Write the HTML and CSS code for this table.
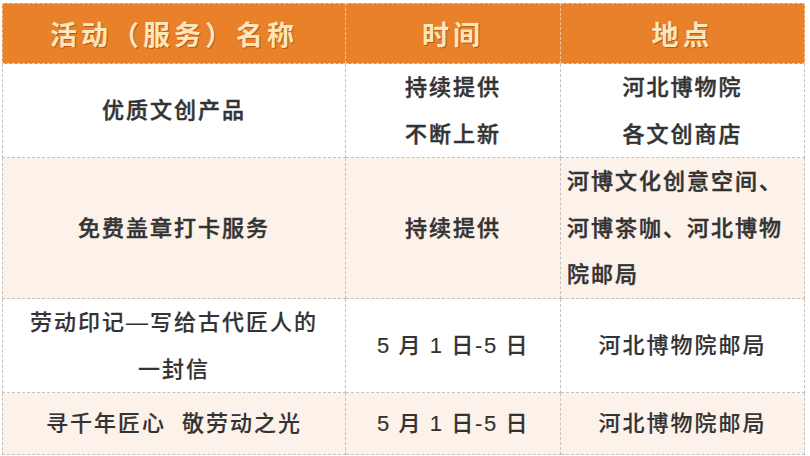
FILE: index.html
```html
<!DOCTYPE html>
<html lang="zh-CN">
<head>
<meta charset="utf-8">
<title>活动安排</title>
<link rel="stylesheet" href="styles.css">
</head>
<body>
<div class="table">
  <div class="cell head first">活动（服务）名称</div>
  <div class="cell head">时间</div>
  <div class="cell head">地点</div>

  <div class="cell first strong">优质文创产品</div>
  <div class="cell strong">持续提供<br>不断上新</div>
  <div class="cell strong">河北博物院<br>各文创商店</div>

  <div class="cell first alt strong">免费盖章打卡服务</div>
  <div class="cell alt strong">持续提供</div>
  <div class="cell alt left strong">河博文化创意空间、河博茶咖、河北博物院邮局</div>

  <div class="cell first wide">劳动印记—写给古代匠人的一封信</div>
  <div class="cell date">5 月 1 日-5 日</div>
  <div class="cell">河北博物院邮局</div>

  <div class="cell first alt">寻千年匠心&nbsp;&nbsp;敬劳动之光</div>
  <div class="cell alt date">5 月 1 日-5 日</div>
  <div class="cell alt">河北博物院邮局</div>
</div>
</body>
</html>
```

FILE: styles.css
```css
html, body {
  margin: 0;
  padding: 0;
  background: #ffffff;
}

body {
  padding: 3px 0 0 2px;
  font-family: "Liberation Sans", "Noto Sans CJK SC", sans-serif;
}

.table {
  display: grid;
  grid-template-columns: 344px 215px 244px;
  grid-template-rows: 61px 94px 141px 94px 62px;
}

.cell {
  box-sizing: border-box;
  display: flex;
  align-items: center;
  justify-content: center;
  text-align: center;
  padding: 2px 6px 0;
  border-right: 1px dashed #c4c0bc;
  border-bottom: 1px dashed #c4c0bc;
  color: #333333;
  font-size: 22px;
  font-weight: 500;
  letter-spacing: 2px;
  line-height: 46.5px;
  -webkit-text-stroke: 0.15px #333333;
  background: #ffffff;
}

.cell.strong {
  -webkit-text-stroke: 0.45px #333333;
}

.cell.first {
  border-left: 1px dashed #c4c0bc;
}

.cell.alt {
  background: #fcf2ea;
}

.cell.left {
  justify-content: flex-start;
  text-align: left;
  padding: 2px 6px 0;
}

.cell.wide {
  padding: 2px 20px 0;
}

.cell.date {
  letter-spacing: 1.6px;
}

.cell.head {
  background: #e9802a;
  border-top: 1px dashed #f4c59c;
  border-right-color: #f4c59c;
  border-bottom-color: #e8d2c0;
  color: #fce6bc;
  font-family: "Noto Sans CJK SC", sans-serif;
  font-size: 27px;
  font-weight: 700;
  letter-spacing: 4px;
  line-height: 1;
  padding: 0 6px;
  -webkit-text-stroke: 0;
  text-shadow: 1px 1px 0 #b95a16;
}

.cell.head.first {
  border-left-color: #f4c59c;
}
```
